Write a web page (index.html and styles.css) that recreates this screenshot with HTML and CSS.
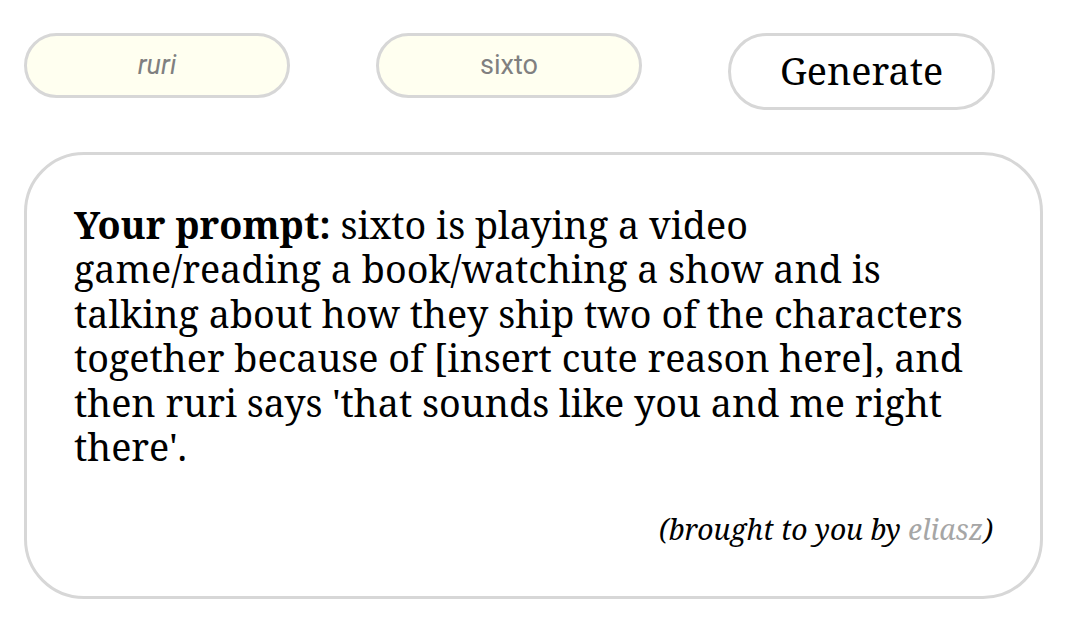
FILE: index.html
```html
<!DOCTYPE html>
<html>
<head>
<meta charset="utf-8">
<link rel="stylesheet" href="styles.css">
</head>
<body>
<div class="page">
  <div class="controls">
    <input class="name-input italic" type="text" placeholder="ruri">
    <input class="name-input" type="text" placeholder="sixto">
    <button class="generate">Generate</button>
  </div>
  <div class="card">
    <p class="prompt"><strong>Your prompt:</strong> sixto is playing a video game/reading a book/watching a show and is talking about how they ship two of the characters together because of [insert cute reason here], and then ruri says 'that sounds like you and me right there'.</p>
    <p class="credit">(brought to you by <span class="author">eliasz</span>)</p>
  </div>
</div>
</body>
</html>
```
FILE: styles.css
```css
html, body {
  margin: 0;
  padding: 0;
  background: #ffffff;
}

.page {
  padding: 33px 37px 0 24px;
  font-family: "Noto Serif", serif;
  color: #000;
}

.controls {
  display: flex;
  align-items: flex-start;
  gap: 86px;
}

.name-input {
  box-sizing: border-box;
  width: 266px;
  height: 65px;
  border: 3.5px solid #d7d7d7;
  border-radius: 33px;
  background: #fffff0;
  font-family: Roboto, "Liberation Sans", sans-serif;
  font-size: 27px;
  text-align: center;
  color: #555;
  outline: none;
  padding: 0 16px 1px;
}

.name-input::placeholder {
  color: #808080;
}

.name-input.italic::placeholder {
  font-style: italic;
}

.generate {
  box-sizing: border-box;
  width: 267px;
  height: 77px;
  border: 3.5px solid #d7d7d7;
  border-radius: 39px;
  background: #ffffff;
  font-family: "Noto Serif", serif;
  font-size: 37.7px;
  color: #000;
  padding: 0 0 2px;
}

.card {
  box-sizing: border-box;
  margin-top: 42px;
  height: 447px;
  border: 3.5px solid #d7d7d7;
  border-radius: 60px;
  padding: 48px 69px 0 47px;
}

.prompt {
  margin: 0;
  font-size: 37.7px;
  line-height: 44.4px;
}

.prompt strong {
  font-weight: 700;
}

.credit {
  margin: 40px -22px 0 0;
  text-align: right;
  font-style: italic;
  font-size: 28.3px;
  line-height: 40px;
}

.author {
  color: #a6a6a6;
}
```
